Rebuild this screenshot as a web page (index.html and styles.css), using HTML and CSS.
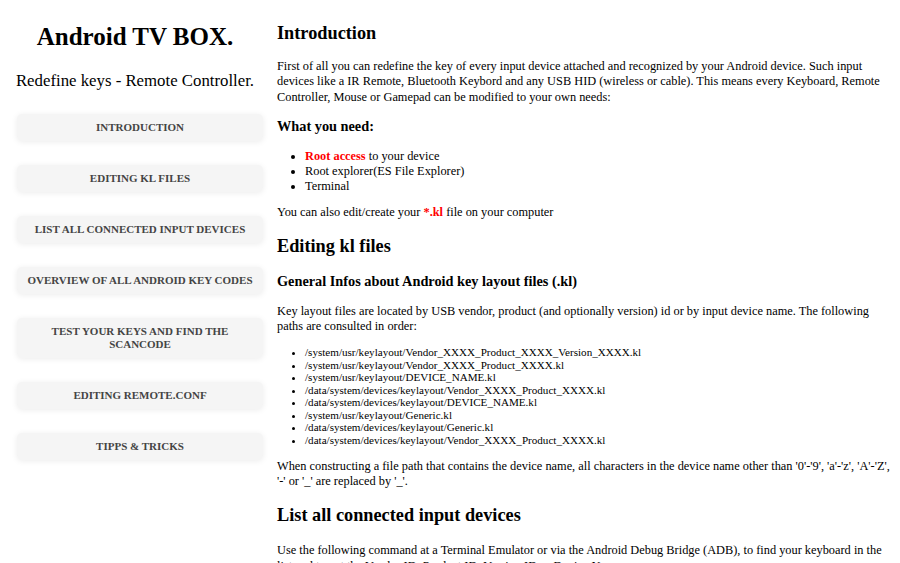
FILE: index.html
```html
<!DOCTYPE html>
<html lang="en">
<head>
<meta charset="utf-8">
<title>Android TV BOX - Redefine keys</title>
<link rel="stylesheet" href="styles.css">
</head>
<body>
<div class="page">
  <aside class="sidebar">
    <h1 class="site-title">Android TV BOX.</h1>
    <p class="site-sub">Redefine keys - Remote Controller.</p>
    <nav class="nav">
      <a class="nav-btn" href="#intro">Introduction</a>
      <a class="nav-btn" href="#kl">Editing kl files</a>
      <a class="nav-btn" href="#list">List all connected input devices</a>
      <a class="nav-btn" href="#codes">Overview of all Android key codes</a>
      <a class="nav-btn" href="#test">Test your keys and find the scancode</a>
      <a class="nav-btn" href="#remote">Editing remote.conf</a>
      <a class="nav-btn" href="#tipps">Tipps &amp; Tricks</a>
    </nav>
  </aside>
  <main class="content">
    <h2 class="h2 first" id="intro">Introduction</h2>
    <p class="para">First of all you can redefine the key of every input device attached and recognized by your Android device. Such input devices like a IR Remote, Bluetooth Keybord and any USB HID (wireless or cable). This means every Keyboard, Remote Controller, Mouse or Gamepad can be modified to your own needs:</p>
    <h3 class="h3">What you need:</h3>
    <ul class="list">
      <li><strong class="red">Root access</strong> to your device</li>
      <li>Root explorer(ES File Explorer)</li>
      <li>Terminal</li>
    </ul>
    <p class="para p-after-list">You can also edit/create your <strong class="red">*.kl</strong> file on your computer</p>
    <h2 class="h2" id="kl">Editing kl files</h2>
    <h3 class="h3 h3-after-h2">General Infos about Android key layout files (.kl)</h3>
    <p class="para p-kl">Key layout files are located by USB vendor, product (and optionally version) id or by input device name. The following paths are consulted in order:</p>
    <ul class="list small">
      <li>/system/usr/keylayout/Vendor_XXXX_Product_XXXX_Version_XXXX.kl</li>
      <li>/system/usr/keylayout/Vendor_XXXX_Product_XXXX.kl</li>
      <li>/system/usr/keylayout/DEVICE_NAME.kl</li>
      <li>/data/system/devices/keylayout/Vendor_XXXX_Product_XXXX.kl</li>
      <li>/data/system/devices/keylayout/DEVICE_NAME.kl</li>
      <li>/system/usr/keylayout/Generic.kl</li>
      <li>/data/system/devices/keylayout/Generic.kl</li>
      <li>/data/system/devices/keylayout/Vendor_XXXX_Product_XXXX.kl</li>
    </ul>
    <p class="para p-after-small">When constructing a file path that contains the device name, all characters in the device name other than '0'-'9', 'a'-'z', 'A'-'Z', '-' or '_' are replaced by '_'.</p>
    <h2 class="h2 h2-list" id="list">List all connected input devices</h2>
    <p class="para p-last">Use the following command at a Terminal Emulator or via the Android Debug Bridge (ADB), to find your keyboard in the list and to get the Vendor ID, Product ID, Version ID or Device Name.</p>
  </main>
</div>
</body>
</html>
```
FILE: styles.css
```css
html, body {
  margin: 0;
  padding: 0;
  background: #ffffff;
}

body {
  font-family: "Liberation Serif", "Times New Roman", serif;
  color: #000000;
  overflow: hidden;
}

.page {
  display: flex;
  align-items: flex-start;
}

.sidebar {
  width: 270px;
  flex: 0 0 270px;
  padding-top: 22px;
}

.site-title {
  margin: 0;
  text-align: center;
  font-size: 25px;
  line-height: 30px;
  font-weight: bold;
}

.site-sub {
  margin: 19px 0 0;
  text-align: center;
  font-size: 16.8px;
  line-height: 20px;
}

.nav {
  display: flex;
  flex-direction: column;
  gap: 24px;
  margin: 23px 7px 0 17px;
}

.nav-btn {
  display: block;
  background: #f5f5f5;
  border-radius: 5px;
  box-shadow: 0 1px 6px rgba(0, 0, 0, 0.08);
  padding: 7px 6px;
  text-align: center;
  text-transform: uppercase;
  text-decoration: none;
  font-size: 11px;
  line-height: 13px;
  font-weight: bold;
  color: #444444;
}

.content {
  flex: 1;
  padding: 0 6px 0 7px;
  min-width: 0;
}

.h2 {
  margin: 14px 0 0;
  font-size: 18.3px;
  line-height: 22px;
  font-weight: bold;
}

.h2.first {
  margin-top: 22px;
}

.h2-list {
  margin-top: 15px;
}

.h3 {
  margin: 11.5px 0 0;
  font-size: 14.3px;
  line-height: 18px;
  font-weight: bold;
}

.h3-after-h2 {
  margin-top: 15px;
}

.para {
  margin: 15px 0 0;
  font-size: 12.35px;
  line-height: 15.4px;
}

.p-after-list {
  margin-top: 11px;
}

.p-kl {
  margin-top: 14px;
}

.p-after-small {
  margin-top: 12.5px;
}

.p-last {
  margin-top: 17px;
}

.list {
  margin: 14.5px 0 0;
  padding-left: 28px;
  font-size: 12.35px;
  line-height: 15px;
}

.list.small {
  margin-top: 11.6px;
  font-size: 11.1px;
  line-height: 12.5px;
}

.red {
  color: #ff0000;
}
```
